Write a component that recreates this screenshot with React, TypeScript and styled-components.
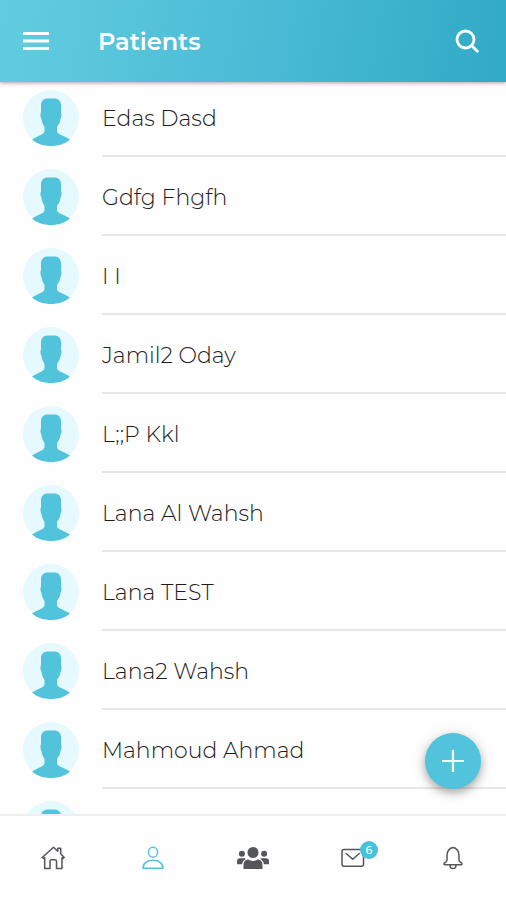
import React from 'react';
import styled, { createGlobalStyle } from 'styled-components';

const GlobalStyle = createGlobalStyle`
  *, *::before, *::after { box-sizing: border-box; }
  body { margin: 0; background: #fefefe; }
  button { font: inherit; }
`;

const Screen = styled.div`
  position: relative;
  display: flex;
  flex-direction: column;
  height: 100vh;
  overflow: hidden;
  background: #fefefe;
  color: #1c1c1c;
  font-family: Montserrat, Inter, 'Open Sans', sans-serif;
`;

const Header = styled.header`
  z-index: 1;
  display: flex;
  flex: none;
  align-items: center;
  gap: 40px;
  height: 82px;
  padding: 0 20px 0 14px;
  color: #fff;
  background: linear-gradient(100deg, #62cde0 0%, #4bbcd6 50%, #31aac5 100%);
  box-shadow: 0 1px 4px rgba(40, 20, 20, 0.4);
`;

const IconButton = styled.button`
  display: flex;
  align-items: center;
  justify-content: center;
  width: 44px;
  height: 44px;
  padding: 0;
  border: 0;
  color: inherit;
  background: none;
  cursor: pointer;
`;

const SearchButton = styled(IconButton)`
  width: 38px;
`;

const Title = styled.h1`
  flex: 1;
  margin: 0;
  padding-top: 2px;
  font-size: 24px;
  font-weight: 600;
  line-height: 32px;
`;

const Content = styled.main`
  flex: 1;
  min-height: 0;
  overflow-y: auto;
  scrollbar-width: none;
`;

const PatientList = styled.ul`
  margin: -4px 0 0;
  padding: 0;
  list-style: none;
`;

const PatientRow = styled.li`
  display: flex;
  gap: 23px;
  height: 79px;
  padding-left: 23px;
`;

const Avatar = styled.svg`
  flex: none;
  width: 56px;
  height: 56px;
  margin-top: 12px;
`;

const PatientName = styled.a`
  flex: 1;
  padding-top: 25px;
  border-bottom: 2px solid #e6e6e6;
  color: inherit;
  font-size: 22px;
  font-weight: 300;
  line-height: 32px;
  text-decoration: none;
`;

const AddButton = styled.button`
  position: absolute;
  right: 25px;
  bottom: 111px;
  z-index: 2;
  display: flex;
  align-items: center;
  justify-content: center;
  width: 56px;
  height: 56px;
  padding: 0;
  border: 0;
  border-radius: 50%;
  color: #fff;
  background: #51c4dc;
  box-shadow: 0 4px 8px rgba(0, 0, 0, 0.28), 0 2px 16px rgba(0, 0, 0, 0.12);
  cursor: pointer;
`;

const TabBar = styled.nav`
  z-index: 1;
  display: grid;
  flex: none;
  grid-template-columns: repeat(5, 1fr);
  height: 86px;
  padding: 0 3px;
  border-top: 2px solid #efefef;
  background: #fefefe;
`;

const Tab = styled.button<{ $active?: boolean }>`
  display: flex;
  align-items: center;
  justify-content: center;
  padding: 0;
  border: 0;
  color: ${({ $active }) => ($active ? '#51c4dc' : '#55565a')};
  background: none;
  cursor: pointer;
`;

const BadgeAnchor = styled.span`
  position: relative;
  display: flex;
`;

const Badge = styled.span`
  position: absolute;
  top: -7px;
  right: -13px;
  width: 18px;
  height: 18px;
  border-radius: 50%;
  color: #fff;
  background: #46c2da;
  font-size: 11px;
  font-weight: 500;
  line-height: 18px;
  text-align: center;
`;

const patients = [
  'Edas Dasd',
  'Gdfg Fhgfh',
  'I I',
  'Jamil2 Oday',
  'L;;P Kkl',
  'Lana Al Wahsh',
  'Lana TEST',
  'Lana2 Wahsh',
  'Mahmoud Ahmad',
  '',
];

const PersonAvatar = () => (
  <Avatar viewBox="0 0 56 56" aria-hidden="true">
    <circle cx="28" cy="28" r="28" fill="#e6f9fe" />
    <path
      d="M18 16C17.800 11 20.500 8.500 25 8.500h6c4.500 0 7.200 2.500 7 7.500v6.500c.9.800.6 5-.4 6-.4 3.500-1.800 6-3.600 8.500v4c0 3.500 7 4.500 13 8.500C42 54 35 56 28 56S14 54 9 49.500C15 45.500 21.500 44.500 21.500 41v-4c-1.600-2.500-2.700-5-3.100-8.500-1-1-1.300-5.200-.4-6z"
      fill="#51c4dc"
    />
  </Avatar>
);

const MenuIcon = () => (
  <svg width="26" height="18" viewBox="0 0 26 18" fill="currentColor" aria-hidden="true">
    <path d="M0 0h26v3H0zM0 7.500h26v3H0zM0 15h26v3H0z" />
  </svg>
);

const SearchIcon = () => (
  <svg width="24" height="24" viewBox="0 0 24 24" fill="none" stroke="currentColor" strokeWidth="2.800" strokeLinecap="round" aria-hidden="true">
    <circle cx="10.500" cy="10.500" r="8.500" />
    <path d="M16.800 16.800l5.500 5.500" />
  </svg>
);

const PlusIcon = () => (
  <svg width="22" height="22" viewBox="0 0 22 22" stroke="currentColor" strokeWidth="2.200" aria-hidden="true">
    <path d="M11 0v22M0 11h22" />
  </svg>
);

const HomeIcon = () => (
  <svg width="24" height="24" viewBox="0 0 24 24" fill="none" stroke="currentColor" strokeWidth="1.500" strokeLinejoin="round" strokeLinecap="round" aria-hidden="true">
    <path d="M1.200 11.500L12.500 1.300l4.300 3.900V2.300h2.900v5.500l3.500 3.700-1.200 1-1-.8V22.500h-5.500v-7.200c0-1-.6-1.600-1.600-1.600h-3.300c-1 0-1.600.6-1.600 1.600v7.200H3.700V11.700l-1.200.8z" />
  </svg>
);

const ProfileIcon = () => (
  <svg width="22" height="24" viewBox="0 0 22 24" fill="none" stroke="currentColor" strokeWidth="1.500" strokeLinejoin="round" aria-hidden="true">
    <ellipse cx="11" cy="6.300" rx="4.600" ry="5" />
    <path d="M1 22.300c0-5 4.200-8 10-8s10 3 10 8z" />
  </svg>
);

const GroupIcon = () => (
  <svg width="32" height="22" viewBox="0 0 32 22" fill="currentColor" aria-hidden="true">
    <circle cx="16" cy="5.500" r="5.500" />
    <circle cx="4.900" cy="6.700" r="3" />
    <circle cx="27.100" cy="6.700" r="3" />
    <path d="M6.500 22v-3.500c0-4 2-6 5-6 1.500 1 2.800 1.400 4.500 1.400s3-.4 4.500-1.400c3 0 5 2 5 6V22z" />
    <path d="M0 17.200v-2.700c0-2 1-3.200 3-3.200h5l.7.6c-2 1.100-3.300 2.900-3.600 5.300zM32 17.200v-2.700c0-2-1-3.200-3-3.200h-5l-.7.6c2 1.100 3.300 2.900 3.600 5.300z" />
  </svg>
);

const MailIcon = () => (
  <svg width="24" height="20" viewBox="0 0 24 20" fill="none" stroke="currentColor" strokeWidth="1.500" strokeLinejoin="round" strokeLinecap="round" aria-hidden="true">
    <rect x="1" y="1.500" width="21.500" height="16.800" rx="2" />
    <path d="M5.200 5.500l6.500 5.700 6.500-5.700" />
  </svg>
);

const BellIcon = () => (
  <svg width="20" height="24" viewBox="0 0 20 24" fill="none" stroke="currentColor" strokeWidth="1.500" strokeLinejoin="round" strokeLinecap="round" aria-hidden="true">
    <path d="M10 1.500c-3.500.3-6 3.700-6 8v4.500c0 1.500-1.100 2.300-2.500 3-.7.400-.7 1.700.2 1.700h16.600c.9 0 .9-1.300.2-1.700-1.400-.7-2.500-1.500-2.500-3V9.500c0-4.300-2.500-7.700-6-8zM7 19c0 2 1.200 3.600 3 3.600s3-1.600 3-3.600" />
  </svg>
);

export default function App() {
  return (
    <>
      <GlobalStyle />
      <Screen>
        <Header>
          <IconButton aria-label="Menu"><MenuIcon /></IconButton>
          <Title>Patients</Title>
          <SearchButton aria-label="Search"><SearchIcon /></SearchButton>
        </Header>
        <Content>
          <PatientList>
            {patients.map((name, index) => (
              <PatientRow key={index}>
                <PersonAvatar />
                <PatientName href="#">{name}</PatientName>
              </PatientRow>
            ))}
          </PatientList>
        </Content>
        <AddButton aria-label="Add patient"><PlusIcon /></AddButton>
        <TabBar>
          <Tab aria-label="Home"><HomeIcon /></Tab>
          <Tab $active aria-label="Patients" aria-current="page"><ProfileIcon /></Tab>
          <Tab aria-label="Groups"><GroupIcon /></Tab>
          <Tab aria-label="Messages">
            <BadgeAnchor>
              <MailIcon />
              <Badge>6</Badge>
            </BadgeAnchor>
          </Tab>
          <Tab aria-label="Notifications"><BellIcon /></Tab>
        </TabBar>
      </Screen>
    </>
  );
}
